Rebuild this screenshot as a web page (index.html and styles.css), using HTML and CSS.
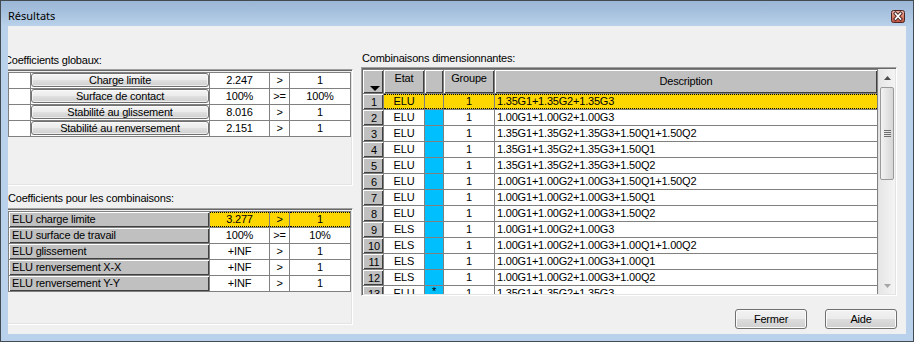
FILE: index.html
```html
<!DOCTYPE html>
<html lang="fr">
<head>
<meta charset="utf-8">
<title>Résultats</title>
<link rel="stylesheet" href="styles.css">
</head>
<body>
<div class="window">
  <div class="titlebar">
    <span class="title">Résultats</span>
    <span class="close">
      <svg width="14" height="13" viewBox="0 0 14 13">
        <defs>
          <linearGradient id="cg" x1="0" y1="0" x2="0" y2="1">
            <stop offset="0" stop-color="#eab2a5"/>
            <stop offset="0.5" stop-color="#d8806c"/>
            <stop offset="1" stop-color="#c4533f"/>
          </linearGradient>
        </defs>
        <rect x="0.5" y="0.5" width="13" height="12" rx="2" fill="url(#cg)" stroke="#4b2622"/>
        <path d="M4.5 3.5 L9.5 9 M9.5 3.5 L4.5 9" stroke="#4b2622" stroke-width="3.4" stroke-linecap="square"/>
        <path d="M4.5 3.5 L9.5 9 M9.5 3.5 L4.5 9" stroke="#ffffff" stroke-width="1.6" stroke-linecap="square"/>
      </svg>
    </span>
  </div>
  <div class="client">
    <div class="left">
      <div class="label label-first">Coefficients globaux:</div>
      <div class="panel panel-left">
        <div class="grid g1">
          <div class="c"></div><div class="c bc"><span class="gbtn">Charge limite</span></div><div class="c ctr">2.247</div><div class="c ctr">&gt;</div><div class="c ctr">1</div>
          <div class="c"></div><div class="c bc"><span class="gbtn">Surface de contact</span></div><div class="c ctr">100%</div><div class="c ctr">&gt;=</div><div class="c ctr">100%</div>
          <div class="c"></div><div class="c bc"><span class="gbtn">Stabilité au glissement</span></div><div class="c ctr">8.016</div><div class="c ctr">&gt;</div><div class="c ctr">1</div>
          <div class="c"></div><div class="c bc"><span class="gbtn">Stabilité au renversement</span></div><div class="c ctr">2.151</div><div class="c ctr">&gt;</div><div class="c ctr">1</div>
        </div>
      </div>
      <div class="label label-second">Coefficients pour les combinaisons:</div>
      <div class="panel panel-left">
        <div class="grid g2">
          <div class="c fx lbl">ELU charge limite</div><div class="c ctr sel">3.277</div><div class="c ctr sel">&gt;</div><div class="c ctr sel">1</div>
          <div class="c fx lbl">ELU surface de travail</div><div class="c ctr">100%</div><div class="c ctr">&gt;=</div><div class="c ctr">10%</div>
          <div class="c fx lbl">ELU glissement</div><div class="c ctr">+INF</div><div class="c ctr">&gt;</div><div class="c ctr">1</div>
          <div class="c fx lbl">ELU renversement X-X</div><div class="c ctr">+INF</div><div class="c ctr">&gt;</div><div class="c ctr">1</div>
          <div class="c fx lbl">ELU renversement Y-Y</div><div class="c ctr">+INF</div><div class="c ctr">&gt;</div><div class="c ctr">1</div>
        </div>
      </div>
    </div>
    <div class="right">
      <div class="label label-right">Combinaisons dimensionnantes:</div>
      <div class="panel panel-right">
        <div class="gwrap">
          <div class="grid g3">
            <div class="c fx corner"><svg class="tri" width="10" height="5" viewBox="0 0 10 5"><path d="M0 0 H10 L5 5 Z" fill="#000"/></svg></div>
            <div class="c fx ctr htop">Etat</div>
            <div class="c fx"></div>
            <div class="c fx ctr htop">Groupe</div>
            <div class="c fx ctr hmid">Description</div>

            <div class="c fx rn">1</div><div class="c ctr sel">ELU</div><div class="c sel"></div><div class="c ctr sel">1</div><div class="c desc sel">1.35G1+1.35G2+1.35G3</div>
            <div class="c fx rn">2</div><div class="c ctr">ELU</div><div class="c blue"></div><div class="c ctr">1</div><div class="c desc">1.00G1+1.00G2+1.00G3</div>
            <div class="c fx rn">3</div><div class="c ctr">ELU</div><div class="c blue"></div><div class="c ctr">1</div><div class="c desc">1.35G1+1.35G2+1.35G3+1.50Q1+1.50Q2</div>
            <div class="c fx rn">4</div><div class="c ctr">ELU</div><div class="c blue"></div><div class="c ctr">1</div><div class="c desc">1.35G1+1.35G2+1.35G3+1.50Q1</div>
            <div class="c fx rn">5</div><div class="c ctr">ELU</div><div class="c blue"></div><div class="c ctr">1</div><div class="c desc">1.35G1+1.35G2+1.35G3+1.50Q2</div>
            <div class="c fx rn">6</div><div class="c ctr">ELU</div><div class="c blue"></div><div class="c ctr">1</div><div class="c desc">1.00G1+1.00G2+1.00G3+1.50Q1+1.50Q2</div>
            <div class="c fx rn">7</div><div class="c ctr">ELU</div><div class="c blue"></div><div class="c ctr">1</div><div class="c desc">1.00G1+1.00G2+1.00G3+1.50Q1</div>
            <div class="c fx rn">8</div><div class="c ctr">ELU</div><div class="c blue"></div><div class="c ctr">1</div><div class="c desc">1.00G1+1.00G2+1.00G3+1.50Q2</div>
            <div class="c fx rn">9</div><div class="c ctr">ELS</div><div class="c blue"></div><div class="c ctr">1</div><div class="c desc">1.00G1+1.00G2+1.00G3</div>
            <div class="c fx rn">10</div><div class="c ctr">ELS</div><div class="c blue"></div><div class="c ctr">1</div><div class="c desc">1.00G1+1.00G2+1.00G3+1.00Q1+1.00Q2</div>
            <div class="c fx rn">11</div><div class="c ctr">ELS</div><div class="c blue"></div><div class="c ctr">1</div><div class="c desc">1.00G1+1.00G2+1.00G3+1.00Q1</div>
            <div class="c fx rn">12</div><div class="c ctr">ELS</div><div class="c blue"></div><div class="c ctr">1</div><div class="c desc">1.00G1+1.00G2+1.00G3+1.00Q2</div>
            <div class="c fx rn">13</div><div class="c ctr">ELU</div><div class="c blue ctr star">*</div><div class="c ctr">1</div><div class="c desc">1.35G1+1.35G2+1.35G3</div>
          </div>
        </div>
        <div class="scrollbar">
          <div class="sb-arrow">
            <svg width="7" height="4" viewBox="0 0 7 4"><path d="M0 4 L3.5 0 L7 4 Z" fill="#4d4d4d"/></svg>
          </div>
          <div class="sb-thumb">
            <svg width="7" height="8" viewBox="0 0 7 8">
              <path d="M0 0.5H7M0 2.5H7M0 4.5H7M0 6.5H7" stroke="#6e6e6e" stroke-width="1"/>
            </svg>
          </div>
          <div class="sb-track"></div>
          <div class="sb-arrow">
            <svg width="7" height="4" viewBox="0 0 7 4"><path d="M0 0 L7 0 L3.5 4 Z" fill="#a6a6a6"/></svg>
          </div>
        </div>
      </div>
      <div class="buttons">
        <button class="btn" type="button">Fermer</button>
        <button class="btn" type="button">Aide</button>
      </div>
    </div>
  </div>
</div>
</body>
</html>
```
FILE: styles.css
```css
* { box-sizing: border-box; margin: 0; padding: 0; }

body {
  margin: 0;
  width: 914px;
  height: 342px;
  overflow: hidden;
  background: #ffffff;
  font-family: "Liberation Sans", Arial, sans-serif;
  font-size: 11px;
  letter-spacing: -0.2px;
  color: #000000;
}

.window {
  width: 914px;
  height: 342px;
  border: 1px solid #434a52;
  background: #b9d1ea;
  display: flex;
  flex-direction: column;
}

.titlebar {
  height: 25px;
  flex: none;
  display: flex;
  align-items: flex-start;
  justify-content: space-between;
  padding: 0 8px 0 7px;
  background: linear-gradient(#9bb7d6 0%, #a6c1de 45%, #b9d1ea 100%);
}

.title {
  font-family: "Noto Sans", "Liberation Sans", sans-serif;
  font-size: 11px;
  letter-spacing: 0;
  line-height: 15px;
  margin-top: 7px;
  color: #000000;
}

.close {
  display: block;
  width: 14px;
  height: 13px;
  margin-top: 9px;
}
.close svg { display: block; }

.client {
  height: 308px;
  margin: 0 7px 0 7px;
  background: #f0f0f0;
  overflow: hidden;
  display: flex;
  align-items: flex-start;
}

.label {
  height: 13px;
  line-height: 13px;
  white-space: nowrap;
}

/* left column */
.left {
  width: 347px;
  margin-left: -2px;
  padding-top: 28px;
  flex: none;
}
.label-first { margin-left: -2px; margin-bottom: 2px; }
.label-second { margin-left: 2px; margin-top: 6px; margin-bottom: 3px; }

.panel {
  border-top: 1px solid #a0a0a0;
  border-left: 1px solid #a0a0a0;
  border-right: 1px solid #ffffff;
  border-bottom: 1px solid #ffffff;
  box-shadow: inset 1px 1px 0 #696969, inset -1px -1px 0 #e3e3e3;
  padding: 1px;
}
.panel-left { width: 347px; height: 117px; }

.grid {
  display: grid;
  gap: 1px;
  background: #808080;
}

.g1 {
  margin-top: 1px;
  width: 343px;
  border: 1px solid #808080;
  grid-template-columns: 21px 178px 59px 19px 60px;
  grid-auto-rows: 15px;
}

.g2 {
  margin-top: 1px;
  width: 343px;
  border: 1px solid #808080;
  grid-template-columns: 200px 59px 19px 60px;
  grid-auto-rows: 15px;
}

.c {
  background: #ffffff;
  line-height: 15px;
  white-space: nowrap;
  overflow: hidden;
}
.ctr { text-align: center; }

.fx {
  background: #c0c0c0;
  box-shadow: inset 1px 1px 0 #ffffff, inset -1px -1px 0 #404040;
}
.lbl { padding-left: 3px; }

.bc { background: #ffffff; }
.gbtn {
  display: block;
  height: 14px;
  line-height: 13px;
  text-align: center;
  border: 1px solid #707070;
  border-radius: 3px;
  background: linear-gradient(#f4f4f4 0%, #ececec 45%, #dedede 55%, #d0d0d0 100%);
  box-shadow: inset 0 0 0 1px rgba(255,255,255,0.6);
}

.sel {
  background: #ffd700;
  border-top: 1px dotted #000000;
  border-bottom: 1px dotted #000000;
  line-height: 13px;
}

/* right column */
.right {
  width: 536px;
  margin-left: 8px;
  padding-top: 26px;
  flex: none;
  display: flex;
  flex-direction: column;
}
.label-right { margin-left: 1px; margin-bottom: 2px; }

.panel-right {
  height: 229px;
  display: flex;
}

.gwrap {
  width: 515px;
  height: 225px;
  overflow: hidden;
  flex: none;
}

.g3 {
  width: 515px;
  padding-top: 1px;
  grid-template-columns: 20px 40px 18px 50px 382px;
  grid-template-rows: 23px;
  grid-auto-rows: 15px;
}

.corner { position: relative; }
.tri { position: absolute; left: 7px; top: 16px; display: block; }

.htop { line-height: 17px; }
.hmid { line-height: 23px; }

.rn { text-align: center; line-height: 16px; padding-left: 2px; }
.desc { padding-left: 2px; }
.blue { background: #00bfff; }
.star { line-height: 11px; font-size: 11px; }

.scrollbar {
  width: 17px;
  height: 225px;
  flex: none;
  display: flex;
  flex-direction: column;
  background: linear-gradient(to right, #e6e6e6, #f4f4f4);
  border-left: 1px solid #e0e0e0;
}
.sb-arrow {
  height: 17px;
  flex: none;
  display: flex;
  align-items: center;
  justify-content: center;
}
.sb-arrow svg { display: block; }
.sb-thumb {
  height: 93px;
  width: 14px;
  margin: 1px 0 0 1px;
  flex: none;
  border: 1px solid #9a9a9a;
  border-radius: 2px;
  background: linear-gradient(to right, #f3f3f3, #e4e4e4 50%, #d6d6d6);
  display: flex;
  align-items: center;
  justify-content: center;
}
.sb-thumb svg { display: block; }
.sb-track { flex: 1; }

.buttons {
  margin-top: 13px;
  display: flex;
  justify-content: flex-end;
  gap: 18px;
}
.btn {
  width: 72px;
  height: 20px;
  font-family: "Liberation Sans", Arial, sans-serif;
  font-size: 11px;
  letter-spacing: -0.2px;
  color: #000000;
  border: 1px solid #707070;
  border-radius: 3px;
  background: linear-gradient(#f2f2f2 0%, #ebebeb 50%, #dddddd 50%, #cfcfcf 100%);
  box-shadow: inset 0 0 0 1px #fbfbfb;
}
```
